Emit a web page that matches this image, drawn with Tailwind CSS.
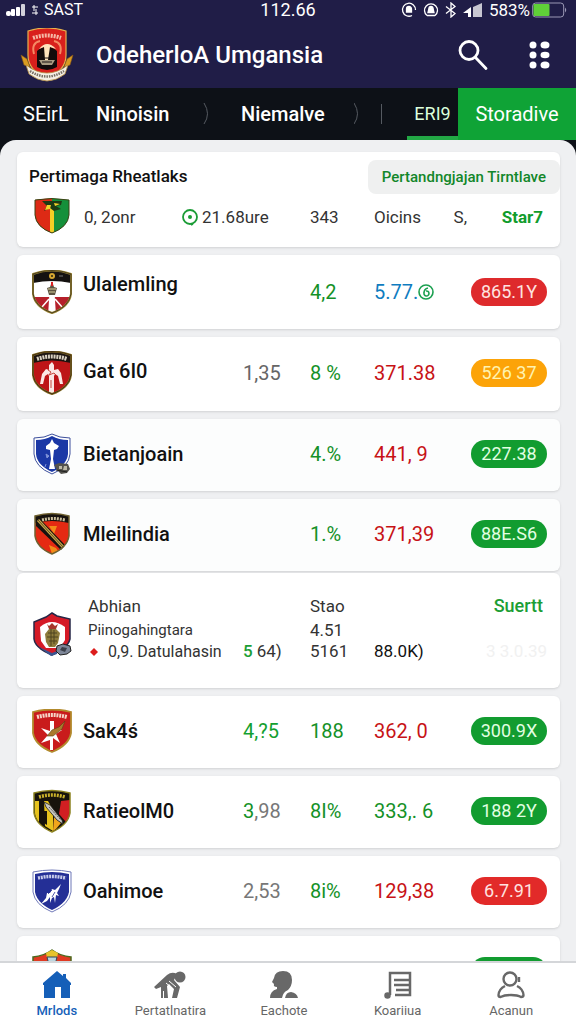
<!DOCTYPE html>
<html lang="id">
<head>
  <meta charset="UTF-8" />
  <meta name="viewport" content="width=device-width, initial-scale=1.0" />
  <title>OdeherloA Umgansia</title>
  <script src="https://cdn.jsdelivr.net/npm/@tailwindcss/browser@4"></script>
</head>
<body class="bg-[#0d1117] h-screen flex flex-col overflow-hidden font-[Roboto,sans-serif] text-[#111]">

  <!-- Header -->
  <header class="bg-[#201d47] text-white">
    <div class="relative flex justify-between items-center h-5 pl-1.5 pr-2 text-[17px] leading-5">
      <div class="flex items-center gap-1.5">
        <svg class="w-5 h-4" viewBox="0 0 20 16" fill="#fff"><rect x="0" y="9" width="5" height="5" rx="2"/><rect x="5" y="7" width="4" height="7" rx="1"/><rect x="10" y="5" width="4" height="9" rx="1"/><rect x="15" y="2" width="4" height="12" rx="1" opacity=".8"/></svg>
        <svg class="w-1.5 h-3" viewBox="0 0 6 12" stroke="#fff" fill="none"><path d="M0 3h6M1 6h4M0 9h6M2 1v4M4 7v4"/></svg>
        <span class="text-base leading-5">SAST</span>
      </div>
      <span class="absolute left-1/2 -translate-x-1/2 text-lg leading-5">112.66</span>
      <div class="flex items-center gap-1.5">
        <svg class="w-4 h-4" viewBox="0 0 16 16" fill="none" stroke="#fff" stroke-width="1.3"><path d="M11 13.5A6.5 6.5 0 1 1 14.5 8"/><path d="M5.5 10V7a2.5 2.5 0 0 1 5 0v3z" fill="#fff"/></svg>
        <svg class="w-4 h-4" viewBox="0 0 16 16" fill="none" stroke="#fff" stroke-width="1.3"><path d="M4 13.5A6.5 6.5 0 1 1 12 13.5M4 13.5h8"/><path d="M5 10.500l1-4a2 2 0 0 1 4 0l1 4z" fill="#fff"/></svg>
        <svg class="w-3 h-4" viewBox="0 0 12 16" fill="none" stroke="#fff" stroke-width="1.3"><path d="M1 4.5l9 7L6 15V1l4 3.5-9 7"/></svg>
        <svg class="w-5 h-4" viewBox="0 0 20 16" fill="#fff"><path d="M0 11l8-6v10H5v-4z"/><path d="M10 5l9-4v14h-9z" opacity=".75"/></svg>
        <span>583%</span>
        <svg class="w-9 h-4 -ml-1" viewBox="0 0 36 16"><rect x=".7" y="1" width="31" height="14" rx="3" fill="none" stroke="#9a98b5"/><rect x="1.5" y="2" width="16" height="12" rx="1" fill="#5fd038"/><path d="M33 5.5q2.5 2.5 0 5z" fill="#9a98b5"/></svg>
      </div>
    </div>
    <div class="flex items-center h-[68px] pl-5 pr-6 pt-0.5">
      <svg class="w-[54px] h-[54px]" viewBox="0 0 54 54">
        <path d="M8 3q19-6 38 0v24q0 16-19 23Q8 43 8 27z" fill="#d9201c" stroke="#e6b24d" stroke-width="1.2"/>
        <path d="M13 10q14-5 28 0" fill="none" stroke="#f6b9a6" stroke-width="4" stroke-dasharray="2 1"/>
        <path d="M14 26q-3-11 6-13M40 26q3-11-6-13" fill="none" stroke="#f58a63" stroke-width="2"/>
        <path d="M17 39V23q10-9 20 0v16q-10 6-20 0z" fill="#130b0b"/>
        <path d="M19 21q8-10 17 0l-6-2-2 13h-3l-1-13z" fill="#ffe3bc"/>
        <path d="M19 32h16l-3 5H22z" fill="#a99b81"/><path d="M22 34h10M24 30h6" stroke="#181010"/>
        <path d="M1 27l6 4 3 8-6-2zM53 27l-6 4-3 8 6-2z" fill="#d99c22" stroke="#8a5513" stroke-width=".6"/>
        <path d="M6 37q21 16 42 0l-3 9q-18 14-36 0z" fill="#f4efe4" stroke="#b28a3c" stroke-width=".8"/>
        <path d="M10 43q17 11 34 0" fill="none" stroke="#776f63" stroke-width="2.5" stroke-dasharray="1.5 1"/>
      </svg>
      <h1 class="flex-1 ml-[22px] text-2xl font-medium">OdeherloA Umgansia</h1>
      <button type="button" aria-label="Cari">
        <svg class="w-[30px] h-8" viewBox="0 0 30 32" fill="none" stroke="#fff" stroke-width="2.8" stroke-linecap="round"><circle cx="11" cy="11.5" r="9"/><path d="M17.5 18.5L28 29.5"/></svg>
      </button>
      <button type="button" aria-label="Menu" class="ml-10">
        <svg class="w-6 h-7" viewBox="0 0 24 28" fill="#fff"><circle cx="5" cy="4" r="3.5"/><ellipse cx="17" cy="4" rx="4.5" ry="3.5"/><circle cx="5" cy="14" r="3.5"/><ellipse cx="17" cy="14" rx="4.5" ry="3.2"/><circle cx="5" cy="24" r="3.5"/><ellipse cx="17" cy="24" rx="4.5" ry="3.5"/></svg>
      </button>
    </div>
  </header>

  <!-- Tabs -->
  <nav class="grid grid-cols-[73px_107px_38px_113px_27px_26px_51px_1fr] items-center h-[52px] pl-[23px] text-white text-xl">
    <button type="button" class="text-left">SEirL</button>
    <button type="button" class="text-left font-medium">Ninoisin</button>
    <svg class="w-2 h-6" viewBox="0 0 8 24" fill="none" stroke="#555a61"><path d="M1 1q7 11 0 21"/></svg>
    <button type="button" class="text-left font-medium">Niemalve</button>
    <svg class="w-2 h-6" viewBox="0 0 8 24" fill="none" stroke="#555a61"><path d="M0 1q7 11 0 21"/></svg>
    <span class="w-px h-5 bg-[#555a61]"></span>
    <button type="button" class="h-full border-b-4 border-[#22a845] pt-1 text-lg text-[#dcffdc]">ERI9</button>
    <button type="button" class="h-full bg-[#0fa336]">Storadive</button>
  </nav>

  <!-- Standings -->
  <main class="flex-1 min-h-0 overflow-y-auto [scrollbar-width:none] bg-[#eff0f2] rounded-t-2xl pl-[17px] pr-4 pt-3">

    <section class="h-[95px] bg-white rounded-md shadow">
      <div class="flex justify-between items-center pt-2">
        <h2 class="pl-3 text-[17px] font-medium">Pertimaga Rheatlaks</h2>
        <button type="button" class="h-[34px] px-3.5 rounded-lg bg-[#eff0f0] text-[15px] font-medium text-[#12872a]">Pertandngjajan Tirntlave</button>
      </div>
      <div class="grid grid-cols-[52px_1fr_67px_64px_97px_76px] items-center pl-[15px] pr-[13px] pt-1 text-[17px] text-[#333]">
        <svg class="w-9 h-9 ml-0.5" viewBox="0 0 36 36">
          <path d="M1 2q17-3 34 0v15q-1 12-17 18Q2 29 1 17z" fill="#15903a"/>
          <path d="M1 2q9-2 17-1.500V35Q2 29 1 17z" fill="#dd2a15"/>
          <path d="M16 4h4v30l-2 1-2-1z" fill="#f3cf25"/>
          <path d="M8 3h20l-1 4-5 1 5 3-7 2-4-3-6 3 3-5z" fill="#1d3a14"/><path d="M13 7h4l-1 4-5 1zM20 5l6 1-5 2z" fill="#f3d32b"/>
          <path d="M1 2q17-3 34 0v15q-1 12-17 18Q2 29 1 17z" fill="none" stroke="#3b4314"/>
        </svg>
        <div class="col-span-2 flex items-center pt-1">
          <span class="w-[98px]">0, 2onr</span>
          <svg class="w-4 h-[18px] mr-1" viewBox="0 0 16 18" fill="none" stroke="#1b9c36" stroke-width="1.8"><circle cx="8" cy="8" r="7"/><circle cx="8" cy="8" r="2" fill="#1b9c36" stroke="none"/><path d="M9 16l2-1"/></svg>
          <span>21.68ure</span>
        </div>
        <span class="pt-1">343</span>
        <span class="flex justify-between pt-1 pr-1">Oicins<span>S,</span></span>
        <span class="pt-1 pr-1 text-right font-bold text-[#119c2c]">Star7</span>
      </div>
    </section>

    <ul class="text-xl">
      <li class="grid grid-cols-[51px_1fr_67px_64px_97px_76px] items-center h-[74px] mt-2 pl-[15px] pr-[13px] bg-white rounded-md shadow">
        <svg class="w-10 h-11" viewBox="0 0 40 44">
          <path d="M1 4Q20-3 39 4v20q-2 13-19 19Q3 37 1 24z" fill="#fff"/>
          <path d="M1 4Q20-3 39 4v9q-19-4-38 0z" fill="#151210"/>
          <path d="M2 27h36q-2 11-18 16Q4 38 2 27z" fill="#b5202a"/>
          <circle cx="20" cy="6" r="3" fill="#d5a631"/><circle cx="20" cy="6" r="1" fill="#221"/><path d="M27 6h4" stroke="#777"/>
          <path d="M20 11l2 6 3 1-2 7h-6l-2-7 3-1z" fill="#5d5441"/><path d="M16 19h8M17 22h6" stroke="#d8cf9d"/><path d="M19 12h2v4h-2z" fill="#d22"/>
          <path d="M18 26h4l1 16h-6zM17 29l-7 8M23 29l7 8" fill="#fff" stroke="#fff" stroke-width="1.5"/>
          <path d="M1 4Q20-3 39 4v20q-2 13-19 19Q3 37 1 24z" fill="none" stroke="#9c8534" stroke-width="2"/>
          <path d="M1 4Q20-3 39 4v20q-2 13-19 19Q3 37 1 24z" fill="none" stroke="#2a2417" stroke-width=".7"/>
        </svg>
        <span class="col-span-2 pb-4 font-medium">Ulalemling</span>
        <span class="text-[#149127]">4,2</span>
        <span class="flex items-center text-[#0f7cc0]">5.77.<svg class="w-4 h-4" viewBox="0 0 16 16" fill="none" stroke="#1ba050" stroke-width="1.6"><circle cx="8" cy="8" r="7"/><path d="M10 4Q6 5 6 9a2.5 2.5 0 1 0 2-2"/></svg></span>
        <span class="rounded-full bg-[#de2a2c] text-center text-lg leading-7 text-[#ffe3e0]">865.1Y</span>
      </li>

      <li class="grid grid-cols-[51px_1fr_67px_64px_97px_76px] items-center h-[74px] mt-2 pl-[15px] pr-[13px] pb-0.5 bg-white rounded-md shadow">
        <svg class="w-10 h-11" viewBox="0 0 40 44">
          <path d="M1 4Q20-3 39 4v20q-2 13-19 19Q3 37 1 24z" fill="#bd1517"/>
          <path d="M1 4Q20-3 39 4v8q-19-5-38 0z" fill="#1c1410"/>
          <path d="M5 8q15-5 30 0" fill="none" stroke="#d8d0c0" stroke-width="4" stroke-dasharray="2 .8"/>
          <path d="M20 11l2 3v5l4-1 3 4 2 11h-3l-2-8-3-2-1 2v17h-5V25l-1-2-3 2-2 8h-3l2-10 4-5 3 1v-5z" fill="#fbe9e5"/>
          <path d="M16 19l3 2-2 3 5-2 2 2M19 29v8" fill="none" stroke="#c54a40"/>
          <path d="M1 4Q20-3 39 4v20q-2 13-19 19Q3 37 1 24z" fill="none" stroke="#887027" stroke-width="2"/>
          <path d="M1 4Q20-3 39 4v20q-2 13-19 19Q3 37 1 24z" fill="none" stroke="#33210e" stroke-width=".8"/>
        </svg>
        <span class="pb-1 font-medium">Gat 6I0</span>
        <span class="text-[#666]">1,35</span>
        <span class="text-[#149127]">8 %</span>
        <span class="text-[#c71216]">371.38</span>
        <span class="rounded-full bg-[#fca308] text-center text-lg leading-7 text-[#fff3b0]">526 37</span>
      </li>

      <li class="grid grid-cols-[51px_1fr_67px_64px_97px_76px] items-center h-[72px] mt-2 pl-[15px] pr-[13px] pb-0.5 bg-[#fcfdfd] rounded-md shadow">
        <svg class="w-10 h-11" viewBox="0 0 40 44">
          <path d="M2 6q11 0 18-4 7 4 18 4v16q-1 13-18 20Q3 35 2 22z" fill="#fff" stroke="#3c4f9b"/>
          <path d="M4 8q9 0 16-4 7 4 16 4v14q-1 11-16 18Q5 33 4 22z" fill="#1b38a6"/>
          <path d="M20 7l2 4 5 3-2 3-3 1-1 9 2 10h-6l2-10-1-9-4-1v-3l4-3z" fill="#fff"/>
          <path d="M14 22l3 2-2 2zM14 32l-1 3" fill="#7f93d8" stroke="#7f93d8"/>
          <path d="M22 33l5-2 9 1 2 5-3 4-6 1-4-4z" fill="#54534e"/><path d="M27 34h3v3h-3zM32 34h3v4h-4z" fill="#bdb9a7"/><path d="M24 38l11 2" stroke="#1e1e1c"/>
        </svg>
        <span class="col-span-2 font-medium">Bietanjoain</span>
        <span class="text-[#149127]">4.%</span>
        <span class="text-[#c71216]">441, 9</span>
        <span class="rounded-full bg-[#129c30] text-center text-lg leading-7 text-[#e2ffe2]">227.38</span>
      </li>

      <li class="grid grid-cols-[51px_1fr_67px_64px_97px_76px] items-center h-[72px] mt-2 pl-[15px] pr-[13px] pb-0.5 bg-[#fcfdfd] rounded-md shadow">
        <svg class="w-10 h-11" viewBox="0 0 40 44">
          <path d="M3 4q17-5 34 0v20q-2 12-17 18Q5 36 3 24z" fill="#e52a12"/>
          <path d="M17 14h8l-3 8zM17 33l7 3 2 3-6 3z" fill="#f28b18"/>
          <path d="M3 4q17-5 34 0v7q-17-4-34 0z" fill="#17120e"/>
          <path d="M10 8q11-3 23 0" fill="none" stroke="#cbbf9c" stroke-width="3" stroke-dasharray="2 1"/>
          <path d="M4 5l6 4 23 24-4 5L4 14z" fill="#17120e"/><path d="M6 8l25 27" stroke="#c9a849" stroke-width="3"/><path d="M6 8l25 27" stroke="#3a3220" stroke-width=".8"/>
          <path d="M3 4q17-5 34 0v20q-2 12-17 18Q5 36 3 24z" fill="none" stroke="#6f6231" stroke-width="1.5"/>
        </svg>
        <span class="col-span-2 font-medium">Mleilindia</span>
        <span class="text-[#149127]">1.%</span>
        <span class="text-[#c71216]">371,39</span>
        <span class="rounded-full bg-[#129c30] text-center text-lg leading-7 text-[#e2ffe2]">88E.S6</span>
      </li>

      <!-- Expanded entry -->
      <li class="grid grid-cols-[56px_1fr_67px_64px_97px_76px] auto-rows-min h-[115px] mt-0.5 pl-[15px] pr-[13px] pt-[19px] bg-white rounded-md shadow text-[17px] leading-[21px] text-[#333]">
        <svg class="row-span-3 w-10 h-11 mt-5" viewBox="0 0 40 44">
          <path d="M20 1l5 3 13 3v20q-2 9-18 16Q3 36 2 27V10l12-5z" fill="#d51a27" stroke="#262747" stroke-width="1.5"/>
          <path d="M8 15q6-5 12-5t13 5v13l-5 8H14l-5-7z" fill="#fff"/>
          <path d="M15 12l2 2 3-3 3 3 3-2-2 5h-7z" fill="#a7372a"/>
          <path d="M17 17h7l4 4-2 10-3 4h-6l-3-5-1-8z" fill="#8d7b3b"/><path d="M16 21h9M15 25h11M17 29h8M19 17v17M22 18v14" stroke="#4e4521"/>
          <path d="M7 35l13 6 5-2v3l-6 2z" fill="#3a5590"/>
          <path d="M25 34l6-2 7 2 1 5-4 3-7 1-4-4z" fill="#7d8698" stroke="#222"/><path d="M30 35l5 1-2 4-5-2z" fill="#3a3f49"/>
        </svg>
        <span class="col-span-2 leading-7">Abhian</span>
        <span class="leading-7">Stao</span>
        <span class="col-span-2 pr-1 text-right text-lg leading-7 font-medium text-[#1c9e35]">Suertt</span>
        <span class="col-span-2 text-[15px] leading-[21px]">Piinogahingtara</span>
        <span class="col-span-3">4.51</span>
        <span class="flex items-center gap-2.5 text-base leading-[21px] whitespace-nowrap"><svg class="w-2 h-2 ml-0.5 shrink-0" viewBox="0 0 8 8" fill="#dc1c1c"><path d="M4 0l2 2 2 2-2 2-2 2-2-2-2-2 2-2z"/></svg>0,9. Datulahasin</span>
        <span><b class="mr-1 font-medium text-[#1c9e35]">5</b>64)</span>
        <span>5161</span>
        <span class="text-[#111]">88.0K)</span>
        <span class="text-right text-[#f1f1f1]">3 3.0.39</span>
      </li>

      <li class="grid grid-cols-[51px_1fr_67px_64px_97px_76px] items-center h-[72px] mt-2 pl-[15px] pr-[13px] pb-0.5 bg-white rounded-md shadow">
        <svg class="w-10 h-11" viewBox="0 0 40 44">
          <path d="M1 3q19-5 38 0v21q-2 12-19 19Q3 36 1 24z" fill="#c91b1c"/>
          <path d="M5 8q15-4 30 0" fill="none" stroke="#f6d5c7" stroke-width="4" stroke-dasharray="2 .8"/>
          <path d="M18 12h4v9l8 0-6 4 4 9-7-5v12h-3V31l-9 3 7-8-7-7 9 3z" fill="#fff"/>
          <path d="M15 27l5-6 7-3 6-6-3 8-9 7z" fill="#a97a2e" stroke="#5e4016" stroke-width=".6"/>
          <path d="M1 3q19-5 38 0v21q-2 12-19 19Q3 36 1 24z" fill="none" stroke="#b28a2c" stroke-width="1.8"/>
        </svg>
        <span class="font-medium">Sak4ś</span>
        <span class="text-[#149f30]">4,?5</span>
        <span class="text-[#149127]">188</span>
        <span class="text-[#c71216]">362, 0</span>
        <span class="rounded-full bg-[#129c30] text-center text-lg leading-7 text-[#e2ffe2]">300.9X</span>
      </li>

      <li class="grid grid-cols-[51px_1fr_67px_64px_97px_76px] items-center h-[72px] mt-2 pl-[15px] pr-[13px] pb-0.5 bg-white rounded-md shadow">
        <svg class="w-10 h-11" viewBox="0 0 40 44">
          <path d="M2 4q18-5 36 0v20q-2 12-18 19Q4 36 2 24z" fill="#17130b"/>
          <path d="M3 12h4v21q-4-5-4-9zM12 12h4l5 9v21l-8-5z" fill="#e6c21d"/><path d="M22 28l7 6-5 6-3 2z" fill="#f0a51c"/>
          <path d="M29 12l9-1v14q-1 5-4 8l-7-8z" fill="#d11f22"/><path d="M12 22h3v14l-3-2z" fill="#17130b"/>
          <path d="M7 8q13-4 26 0" fill="none" stroke="#c9b02a" stroke-width="3.5" stroke-dasharray="2 1"/>
          <path d="M12 13l6 3 12 15 1 4-6-4-11-13z" fill="#c8c6c0" stroke="#222" stroke-width=".8"/><path d="M17 18l12 13" stroke="#555" stroke-dasharray="2 1"/>
          <path d="M2 4q18-5 36 0v20q-2 12-18 19Q4 36 2 24z" fill="none" stroke="#8c8220" stroke-width="1.5"/>
        </svg>
        <span class="font-medium">RatieolM0</span>
        <span class="text-[#777]"><span class="text-[#149127]">3</span>,98</span>
        <span class="text-[#149127]">8I%</span>
        <span class="text-[#149127]">333,. 6</span>
        <span class="rounded-full bg-[#129c30] text-center text-lg leading-7 text-[#e2ffe2]">188 2Y</span>
      </li>

      <li class="grid grid-cols-[51px_1fr_67px_64px_97px_76px] items-center h-[72px] mt-2 pl-[15px] pr-[13px] pb-0.5 bg-white rounded-md shadow">
        <svg class="w-10 h-11" viewBox="0 0 40 44">
          <path d="M1 3q19-4 38 0v20q-2 13-19 20Q3 36 1 23z" fill="#fff" stroke="#6f78b8"/>
          <path d="M3 5q17-4 34 0v18q-2 11-17 18Q5 34 3 23z" fill="#242f96"/>
          <path d="M6 9q14-3 28 0" fill="none" stroke="#c7cbea" stroke-width="3.5" stroke-dasharray="2 .8"/>
          <path d="M29 15l-2 5-2 4 2 3-3-1-1 8-1-6-2 1-2 5v-6l-3 4-6 3 5-6 1-5 3 0 2-4 3 1z" fill="#fff"/><path d="M16 25l4-4M20 28l3-5" stroke="#242f96" stroke-width=".8"/>
        </svg>
        <span class="font-medium">Oahimoe</span>
        <span class="text-[#777]">2,53</span>
        <span class="text-[#149127]">8i%</span>
        <span class="text-[#c71216]">129,38</span>
        <span class="rounded-full bg-[#e22a29] text-center text-lg leading-7 text-[#ffe3e0]">6.7.91</span>
      </li>

      <li class="grid grid-cols-[51px_1fr_76px] items-center h-[72px] mt-2 pl-[15px] pr-[13px] pb-0.5 bg-white rounded-md shadow">
        <svg class="w-10 h-11" viewBox="0 0 40 44">
          <path d="M1 8q11-1 19-7 8 6 19 7v16q-2 12-19 19Q3 36 1 24z" fill="#e03a22" stroke="#4c6a1f" stroke-width="1.5"/>
          <path d="M14 4l6-3 6 3-1 5H15z" fill="#e8c32b"/><path d="M15 8h10l-2 8h-6z" fill="#bcd6df" stroke="#345"/>
        </svg>
        <span></span>
        <span class="h-7 rounded-full bg-[#129c30]"></span>
      </li>
    </ul>
  </main>

  <!-- Bottom navigation -->
  <nav class="grid grid-cols-5 h-[63px] shrink-0 pr-2 pt-2 bg-white border-t-2 border-[#d4d6d9] text-[13px] leading-[18px] text-[#666]">
    <a href="#" class="flex flex-col items-center gap-[3px] font-medium text-[#155fb8]">
      <svg class="w-7 h-7" viewBox="0 0 28 28" fill="#155fb8"><path d="M14 0l6 5V3h3v4l5 5v2h-1v13h-9V16h-6v11H1V14H0v-2z"/></svg>
      Mrlods
    </a>
    <a href="#" class="flex flex-col items-center gap-[3px]">
      <svg class="w-8 h-7" viewBox="0 0 32 28" fill="#686868"><circle cx="26" cy="6" r="5.5"/><path d="M0 16L13 4q5-4 10-1l-3 6 6 7-3 11h-5l2-9-5-5-2 2 1 12h-4v-7h-1v7H7V16l-5 2z"/><path d="M12 12l6 5M15 10l7 6" stroke="#fff" fill="none"/></svg>
      Pertatlnatira
    </a>
    <a href="#" class="flex flex-col items-center gap-[3px]">
      <svg class="w-7 h-7" viewBox="0 0 28 28" fill="#686868"><path d="M13 0q9 0 9 9 0 6-4 10-5 2-6 8H0q0-7 7-9v-2q-4 0-3-3l-2-2 2-4Q5 0 13 0z"/><path d="M15 27q1-6 6-6 6 1 7 6z"/></svg>
      Eachote
    </a>
    <a href="#" class="flex flex-col items-center gap-[3px]">
      <svg class="w-7 h-7" viewBox="0 0 28 28" fill="none" stroke="#686868" stroke-width="2.5"><path d="M6 24V2h20v22H11M10 9h15M10 14h15M12 19h13"/><circle cx="3.5" cy="24.5" r="2" fill="#686868"/></svg>
      Koariiua
    </a>
    <a href="#" class="flex flex-col items-center gap-[3px]">
      <svg class="w-7 h-7" viewBox="0 0 28 28" fill="none" stroke="#686868" stroke-width="2.4"><circle cx="13" cy="8" r="6.5"/><path d="M22 6v5M8 15q-6 3-6.500 9 0 2 2 2 4-2 10.500-2t10 2q2.500 0 2.500-2-.5-6-6.500-9"/></svg>
      Acanun
    </a>
  </nav>

</body>
</html>
